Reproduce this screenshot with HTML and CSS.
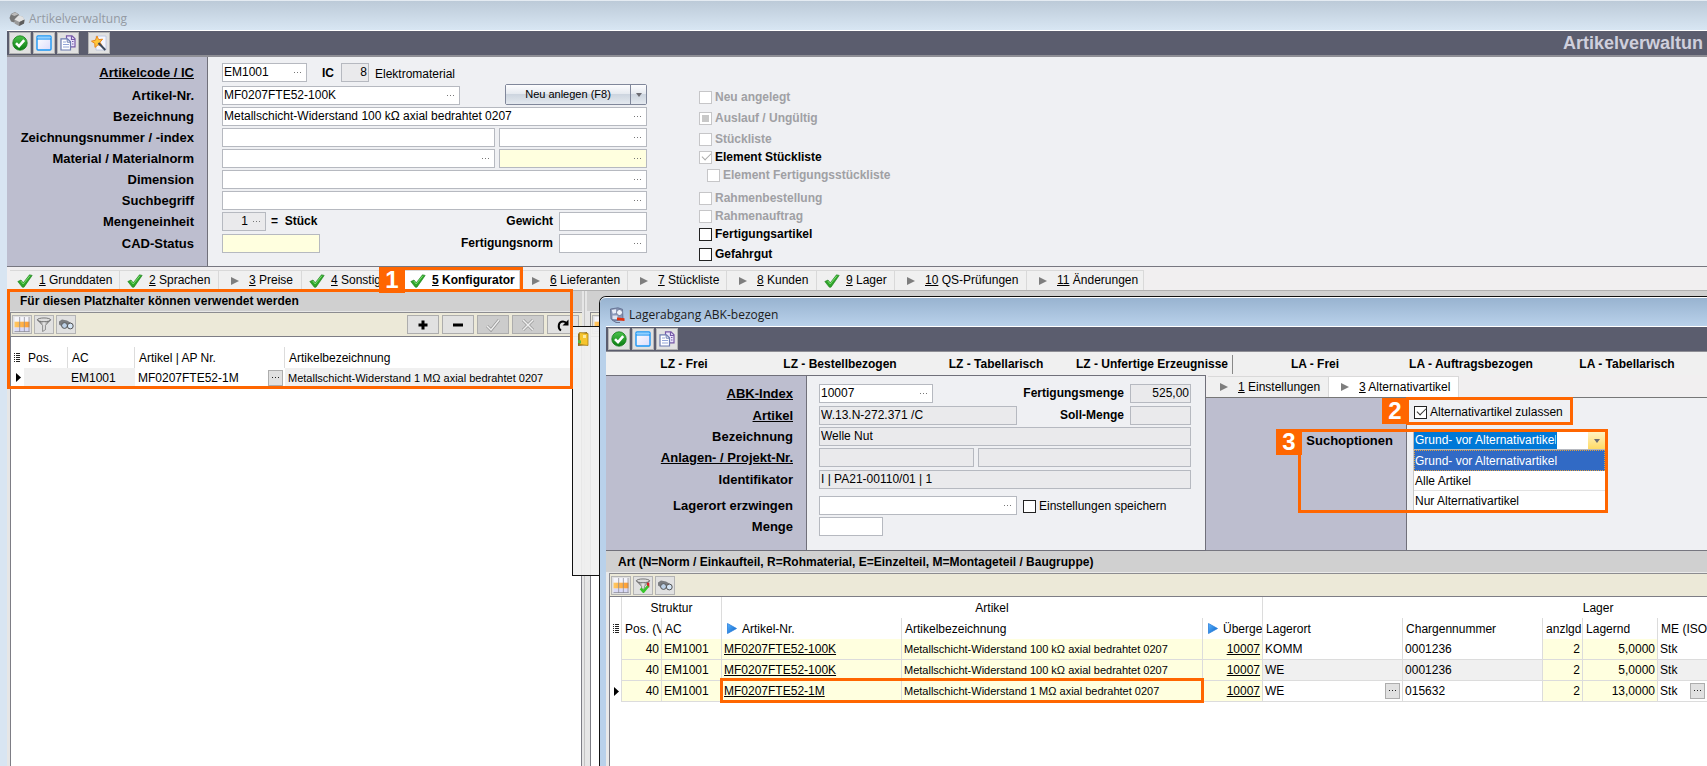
FILE: index.html
```html
<!DOCTYPE html>
<html lang="de">
<head>
<meta charset="utf-8">
<title>Artikelverwaltung</title>
<link rel="stylesheet" href="styles.css">
</head>
<body>
<svg class="sprite" aria-hidden="true">
  <defs>
    <linearGradient id="gGreen" x1="0" y1="0" x2="0" y2="1"><stop offset="0" stop-color="#4cc24a"/><stop offset="1" stop-color="#0a7d12"/></linearGradient>
    <linearGradient id="gWin" x1="0" y1="0" x2="1" y2="1"><stop offset="0" stop-color="#ffffff"/><stop offset="1" stop-color="#dcdcfb"/></linearGradient>
    <linearGradient id="gOrange" x1="0" y1="0" x2="1" y2="0"><stop offset="0" stop-color="#ffc963"/><stop offset="1" stop-color="#ff9a2e"/></linearGradient>
    <linearGradient id="gMetal" x1="0" y1="0" x2="1" y2="0"><stop offset="0" stop-color="#444"/><stop offset=".5" stop-color="#eee"/><stop offset="1" stop-color="#555"/></linearGradient>
    <linearGradient id="gBlue" x1="0" y1="0" x2="1" y2="1"><stop offset="0" stop-color="#5ab4ff"/><stop offset="1" stop-color="#0a62c8"/></linearGradient>
  </defs>
  <symbol id="ok" viewBox="0 0 16 16"><circle cx="8" cy="8" r="7.2" fill="url(#gGreen)" stroke="#117a17" stroke-width=".8"/><path d="M4 8.2l3 3 5.2-6" fill="none" stroke="#fff" stroke-width="2.6"/></symbol>
  <symbol id="window" viewBox="0 0 16 16"><rect x="1" y="1" width="14" height="14" rx="1" fill="url(#gWin)" stroke="#1b97f5" stroke-width="1.4"/><path d="M1.6 2.4h12.8" stroke="#8fd0ff" stroke-width="1.4"/><path d="M1 4h14" stroke="#1b97f5" stroke-width="1.2"/></symbol>
  <symbol id="copy" viewBox="0 0 16 16"><path d="M6.5.8h5.5l3 3v8H6.500z" fill="#e9e4fb" stroke="#7759a8" stroke-width="1.2"/><path d="M11.500 1v3.500h3.500M12 6.500h1.500M12 9h1.500" fill="none" stroke="#7759a8" stroke-width="1.2"/><path d="M1 3.800h6.500l3 3V15H1z" fill="#fff" stroke="#6b7bb0" stroke-width="1.200"/><path d="M7.200 4v3.200h3.200" fill="none" stroke="#6b7bb0"/><path d="M3 7h3M3 9.500h6M3 12h6" stroke="#93a6d8" stroke-width="1.200"/></symbol>
  <symbol id="wand" viewBox="0 0 16 16"><path d="M5 1h10v14H5z" fill="#f4f6fd" stroke="#b8c2dd" stroke-width=".8"/><path d="M6 1l1.600 3.600 4-.4-2.600 3 2 3.600-4-1-3 2.600-.2-4L.500 6.200l4-1z" fill="#ffc63a" stroke="#e8871e" stroke-width="1"/><path d="M7.500 8l6.800 7" stroke="#3c4a5c" stroke-width="2"/></symbol>
  <symbol id="cubes" viewBox="0 0 16 16"><path d="M.5 7l1.500-4L6 1l4 2.500L9.500 8 5 11.500 2 10.500z" fill="#777"/><path d="M2 3.500L6 1.200l3.500 2L5.500 5z" fill="#bbb"/><path d="M5.500 8.500l4-4 4 1L15.500 9l-.5 3.500-5 2.500-4.500-2.500z" fill="#9a9a9a"/><path d="M5.500 8.500l4-4 4 1 2 3L10.500 11z" fill="#e2e2e2"/><path d="M10.500 11l5-2.500-.5 4-4.800 2.500z" fill="#5d5d5d"/></symbol>
  <symbol id="stock" viewBox="0 0 16 16"><path d="M1.500 2L9 .800l4.500 1.500.5 10L6 14l-4-2z" fill="#8c9abb" stroke="#5c6889" stroke-width=".8"/><path d="M2.800 3l4-.8 1 3.600-4 1z" fill="#e7edf8"/><circle cx="10.500" cy="5.500" r="3" fill="#eff3fb" stroke="#5c6889" stroke-width=".8"/><path d="M3.500 8.500h5v3.500h-5z" fill="#dfe5f2"/><path d="M3 13l4 2.500h4" stroke="#6c7796" fill="none"/><path d="M8 10.500l7.500.8v2.800L8 13.300z" fill="#e2310f"/></symbol>
  <symbol id="check" viewBox="0 0 16 14"><path d="M.8 7.500L4 6l2.300 2.800L12.500.800l2.700.6L7 13.200H5.300z" fill="#2fa52a" stroke="#1f7e1d" stroke-width=".6"/><path d="M3.800 7l2.400 3L13 1.600" fill="none" stroke="#7ade70" stroke-width="1"/></symbol>
  <symbol id="tri" viewBox="0 0 8 8"><path d="M0 0l8 4-8 4z" fill="#7e7e7e"/></symbol>
  <symbol id="tribl" viewBox="0 0 10 11"><path d="M.5.500l9 5-9 5z" fill="url(#gBlue)" stroke="#2a7edb" stroke-width=".8"/></symbol>
  <symbol id="mark" viewBox="0 0 5 9"><path d="M0 0l5 4.500L0 9z" fill="#000"/></symbol>
  <symbol id="rows" viewBox="0 0 6 10"><path d="M0 .5h1M2 .5h4M0 2.500h1M2 2.500h4M0 4.500h1M2 4.500h4M0 6.500h1M2 6.500h4M0 8.500h1M2 8.500h4" stroke="#222"/></symbol>
  <symbol id="grid" viewBox="0 0 16 16"><rect width="16" height="16" fill="#f4f4fb"/><rect y="11" width="16" height="5" fill="#dadaf7"/><rect y="5" width="16" height="6" fill="url(#gOrange)"/><path d="M5.500 0v16M10.500 0v16M0 15.500h16M15.500 0v16" stroke="#8b8b93" stroke-width=".8"/></symbol>
  <symbol id="funnel" viewBox="0 0 16 16"><path d="M1 3l5.500 6v6.500l3-2V9L15 3z" fill="url(#gMetal)" stroke="#555" stroke-width=".6"/><ellipse cx="8" cy="3" rx="7" ry="2" fill="#ddd" stroke="#555" stroke-width=".8"/></symbol>
  <symbol id="funnel2" viewBox="0 0 16 16"><path d="M1 3l5.500 6v4l3-2V9L15 3z" fill="url(#gMetal)" stroke="#555" stroke-width=".6"/><ellipse cx="8" cy="3" rx="7" ry="2" fill="#ddd" stroke="#555" stroke-width=".8"/><path d="M13.500 5v5" stroke="#d92323" stroke-width="2.500"/><path d="M5.500 11l3 3.500 5-6" fill="none" stroke="#38c42c" stroke-width="2.800"/></symbol>
  <symbol id="bino" viewBox="0 0 16 12"><path d="M1 3l3-2 5 1 5 3 1 4-4 1-3-3-4 1-3-2z" fill="#7b7d80"/><circle cx="6.500" cy="7" r="2.900" fill="#bcd0e6" stroke="#555"/><circle cx="12.300" cy="7.500" r="2.900" fill="#d5e5f5" stroke="#555"/></symbol>
  <symbol id="door" viewBox="0 0 12 16"><path d="M1 2.500L10 1v13L1 15z" fill="#8f6a1d"/><path d="M2.500 1.500L11 2.500v12l-8.500-1z" fill="#f6c42d" stroke="#a37c15" stroke-width=".8"/><rect x="6" y="4" width="3" height="3" fill="#fdeaa0"/><path d="M1 9l3 .5v3L1 12z" fill="#55b640"/></symbol>
  <symbol id="reload" viewBox="0 0 14 14"><path d="M5 12.500C1.500 10.500 2 3.500 7 3.500c2 0 3 1 3.500 2" fill="none" stroke="#000" stroke-width="2"/><path d="M12.500 1.500v6h-6z" fill="#000"/></symbol>
</svg>

<div class="app">
  <header class="titlebar"><svg class="i16"><use href="#cubes"/></svg><h1>Artikelverwaltung</h1></header>
  <div class="frame">
    <div class="toolbar">
      <button class="tool" aria-label="OK"><svg><use href="#ok"/></svg></button>
      <button class="tool" aria-label="Fenster"><svg><use href="#window"/></svg></button>
      <button class="tool" aria-label="Kopieren"><svg><use href="#copy"/></svg></button>
      <button class="tool tool--apart" aria-label="Assistent"><svg><use href="#wand"/></svg></button>
      <span class="toolbar__name">Artikelverwaltun</span>
    </div>

    <section class="form">
      <div class="labels">
        <a class="row row--first" href="#code">Artikelcode / IC</a>
        <label class="row" for="nr">Artikel-Nr.</label>
        <label class="row" for="bez">Bezeichnung</label>
        <label class="row" for="zei">Zeichnungsnummer / -index</label>
        <label class="row" for="mat">Material / Materialnorm</label>
        <label class="row" for="dim">Dimension</label>
        <label class="row" for="such">Suchbegriff</label>
        <label class="row row--tall" for="me">Mengeneinheit</label>
        <label class="row" for="cad">CAD-Status</label>
      </div>
      <div class="fields fields--main">
        <div class="row row--first">
          <span class="field w85"><input id="code" value="EM1001"><button class="dots" aria-label="Auswahl"></button></span>
          <label class="cap cap--ic" for="ic">IC</label>
          <span class="field field--ro w28"><input id="ic" class="num" value="8" readonly></span>
          <span class="plain">Elektromaterial</span>
        </div>
        <div class="row">
          <span class="field w238"><input id="nr" value="MF0207FTE52-100K"><button class="dots" aria-label="Auswahl"></button></span>
          <span class="split"><button class="split__main">Neu anlegen (F8)</button><button class="split__more" aria-label="Mehr"></button></span>
        </div>
        <div class="row"><span class="field grow"><input id="bez" value="Metallschicht-Widerstand 100 kΩ axial bedrahtet 0207"><button class="dots" aria-label="Auswahl"></button></span></div>
        <div class="row"><span class="field grow"><input id="zei"></span><span class="field w148"><input aria-label="Zeichnungsindex"><button class="dots" aria-label="Auswahl"></button></span></div>
        <div class="row"><span class="field grow"><input id="mat"><button class="dots" aria-label="Auswahl"></button></span><span class="field field--yellow w148"><input aria-label="Materialnorm"><button class="dots" aria-label="Auswahl"></button></span></div>
        <div class="row"><span class="field grow"><input id="dim"><button class="dots" aria-label="Auswahl"></button></span></div>
        <div class="row"><span class="field grow"><input id="such"><button class="dots" aria-label="Auswahl"></button></span></div>
        <div class="row row--tall"><span class="field field--ro w44"><input id="me" class="num" value="1" readonly><button class="dots" aria-label="Auswahl"></button></span><span class="cap">=&nbsp; Stück</span><label class="cap cap--end" for="gew">Gewicht</label><span class="field w88"><input id="gew"></span></div>
        <div class="row"><span class="field field--yellow w98"><input id="cad"></span><label class="cap cap--end" for="fno">Fertigungsnorm</label><span class="field w88"><input id="fno"><button class="dots" aria-label="Auswahl"></button></span></div>
      </div>
      <div class="checks">
        <label class="chk is-off"><input type="checkbox" disabled>Neu angelegt</label>
        <label class="chk is-off chk--wide"><input type="checkbox" class="mixed" disabled>Auslauf / Ungültig</label>
        <label class="chk is-off chk--wide"><input type="checkbox" disabled>Stückliste</label>
        <label class="chk"><input type="checkbox" checked disabled>Element Stückliste</label>
        <label class="chk is-off chk--sub"><input type="checkbox" disabled>Element Fertigungsstückliste</label>
        <label class="chk is-off chk--group"><input type="checkbox" disabled>Rahmenbestellung</label>
        <label class="chk is-off"><input type="checkbox" disabled>Rahmenauftrag</label>
        <label class="chk"><input type="checkbox">Fertigungsartikel</label>
        <label class="chk chk--last"><input type="checkbox">Gefahrgut</label>
      </div>
    </section>

    <nav class="tabs">
      <button class="tab"><svg class="ck"><use href="#check"/></svg><span><u>1</u> Grunddaten</span></button>
      <button class="tab"><svg class="ck"><use href="#check"/></svg><span><u>2</u> Sprachen</span></button>
      <button class="tab"><svg class="tr"><use href="#tri"/></svg><span><u>3</u> Preise</span></button>
      <button class="tab"><svg class="ck"><use href="#check"/></svg><span><u>4</u> Sonstig</span></button>
      <button class="tab is-active"><svg class="ck"><use href="#check"/></svg><span><u>5</u> Konfigurator</span><i class="mark mark--tab"></i><b class="badge badge--tab">1</b></button>
      <button class="tab"><svg class="tr"><use href="#tri"/></svg><span><u>6</u> Lieferanten</span></button>
      <button class="tab"><svg class="tr"><use href="#tri"/></svg><span><u>7</u> Stückliste</span></button>
      <button class="tab"><svg class="tr"><use href="#tri"/></svg><span><u>8</u> Kunden</span></button>
      <button class="tab"><svg class="ck"><use href="#check"/></svg><span><u>9</u> Lager</span></button>
      <button class="tab"><svg class="tr"><use href="#tri"/></svg><span><u>10</u> QS-Prüfungen</span></button>
      <button class="tab"><svg class="tr"><use href="#tri"/></svg><span><u>11</u> Änderungen</span></button>
    </nav>

    <div class="panes">
      <section class="pane pane--left">
        <h2 class="bar">Für diesen Platzhalter können verwendet werden</h2>
        <div class="gridbar">
          <button class="mini" aria-label="Tabelle"><svg><use href="#grid"/></svg></button>
          <button class="mini" aria-label="Filter"><svg><use href="#funnel"/></svg></button>
          <button class="mini" aria-label="Suchen"><svg><use href="#bino"/></svg></button>
          <span class="gridbar__edit">
            <button class="edit" aria-label="Hinzufügen"><svg viewBox="0 0 14 14"><path d="M2.500 7h9M7 2.500v9" stroke="#000" stroke-width="3"/></svg></button>
            <button class="edit" aria-label="Entfernen"><svg viewBox="0 0 14 14"><path d="M2 7h10" stroke="#000" stroke-width="3"/></svg></button>
            <button class="edit edit--off" aria-label="Bestätigen" disabled><svg viewBox="0 0 14 14"><path d="M1 8l4 4 8-10" fill="none" stroke="#999" stroke-width="3"/><path d="M1 8l4 4 8-10" fill="none" stroke="#eee" stroke-width="1.500"/></svg></button>
            <button class="edit edit--off" aria-label="Abbrechen" disabled><svg viewBox="0 0 14 14"><path d="M2 2l10 10M12 2L2 12" stroke="#999" stroke-width="3"/><path d="M2 2l10 10M12 2L2 12" stroke="#eee" stroke-width="1.500"/></svg></button>
            <button class="edit" aria-label="Aktualisieren"><svg><use href="#reload"/></svg></button>
          </span>
        </div>
        <div class="gridbox">
          <table class="t1">
            <colgroup><col class="c-ind"><col class="c-p"><col class="c-a"><col class="c-n"><col></colgroup>
            <thead><tr><th><svg class="rows"><use href="#rows"/></svg></th><th>Pos.</th><th>AC</th><th>Artikel | AP Nr.</th><th>Artikelbezeichnung</th></tr></thead>
            <tbody><tr><td class="ind"><svg class="cur"><use href="#mark"/></svg></td><td></td><td>EM1001</td><td class="white"><span class="cell">MF0207FTE52-1M<button class="pick" aria-label="Auswahl"></button></span></td><td class="small">Metallschicht-Widerstand 1 MΩ axial bedrahtet 0207</td></tr></tbody>
          </table>
        </div>
        <i class="mark mark--pane"></i>
      </section>
      <div class="splitter"></div>
      <section class="pane pane--right"><h2 class="bar"></h2><div class="gridbar"><button class="mini" aria-label="Tabelle"><svg><use href="#grid"/></svg></button></div><div class="gridbox"></div></section>
    </div>
  </div>

  <aside class="flyout"><svg><use href="#door"/></svg></aside>

  <div class="dialog">
    <header class="titlebar titlebar--on"><svg class="i16"><use href="#stock"/></svg><h1>Lagerabgang ABK-bezogen</h1></header>
    <div class="dialog__body">
      <div class="toolbar">
        <button class="tool" aria-label="OK"><svg><use href="#ok"/></svg></button>
        <button class="tool" aria-label="Fenster"><svg><use href="#window"/></svg></button>
        <button class="tool" aria-label="Kopieren"><svg><use href="#copy"/></svg></button>
      </div>
      <nav class="modes">
        <button>LZ - Frei</button><button>LZ - Bestellbezogen</button><button>LZ - Tabellarisch</button><button>LZ - Unfertige Erzeugnisse</button><hr><button>LA - Frei</button><button>LA - Auftragsbezogen</button><button>LA - Tabellarisch</button>
      </nav>
      <div class="halves">
        <section class="form form--abk">
          <div class="labels">
            <a class="row row--tall" href="#abk">ABK-Index</a>
            <a class="row" href="#art">Artikel</a>
            <label class="row" for="bez2">Bezeichnung</label>
            <a class="row row--tall" href="#anl">Anlagen- / Projekt-Nr.</a>
            <label class="row row--gap" for="idf">Identifikator</label>
            <label class="row" for="lag">Lagerort erzwingen</label>
            <label class="row" for="men">Menge</label>
          </div>
          <div class="fields fields--abk">
            <div class="row row--tall"><span class="field w114"><input id="abk" value="10007"><button class="dots" aria-label="Auswahl"></button></span><label class="cap cap--end" for="fm">Fertigungsmenge</label><span class="field field--ro w61"><input id="fm" class="num" value="525,00" readonly></span></div>
            <div class="row"><span class="field field--ro w198"><input id="art" value="W.13.N-272.371 /C" readonly></span><label class="cap cap--end" for="sm">Soll-Menge</label><span class="field field--ro w61"><input id="sm" readonly></span></div>
            <div class="row"><span class="field field--ro grow"><input id="bez2" value="Welle Nut" readonly></span></div>
            <div class="row row--tall"><span class="field field--ro w155"><input id="anl" readonly></span><span class="field field--ro grow"><input aria-label="Projekt-Nr." readonly></span></div>
            <div class="row row--gap"><span class="field field--ro grow"><input id="idf" value="I | PA21-00110/01 | 1" readonly></span></div>
            <div class="row"><span class="field w198"><input id="lag"><button class="dots" aria-label="Auswahl"></button></span><label class="chk chk--plain"><input type="checkbox">Einstellungen speichern</label></div>
            <div class="row"><span class="field w64"><input id="men"></span></div>
          </div>
        </section>
        <section class="options">
          <nav class="tabs tabs--options">
            <button class="tab"><svg class="tr"><use href="#tri"/></svg><span><u>1</u> Einstellungen</span></button>
            <button class="tab is-active"><svg class="tr"><use href="#tri"/></svg><span><u>3</u> Alternativartikel</span></button>
          </nav>
          <div class="form form--options">
            <div class="labels"><label for="opt">Suchoptionen</label></div>
            <div class="fields">
              <div class="allow"><label class="chk chk--plain"><input type="checkbox" checked>Alternativartikel zulassen</label><i class="mark mark--allow"></i><b class="badge badge--allow">2</b></div>
              <div class="combo">
                <select id="opt"><option>Grund- vor Alternativartikel</option><option>Alle Artikel</option><option>Nur Alternativartikel</option></select>
                <button class="combo__btn" aria-label="Öffnen"></button>
                <ul class="list" role="listbox"><li class="is-sel" role="option">Grund- vor Alternativartikel</li><li role="option">Alle Artikel</li><li role="option">Nur Alternativartikel</li></ul>
                <i class="mark mark--combo"></i><b class="badge badge--combo">3</b>
              </div>
            </div>
          </div>
        </section>
      </div>
      <section class="pane pane--stock">
        <h2 class="bar">Art (N=Norm / Einkaufteil, R=Rohmaterial, E=Einzelteil, M=Montageteil / Baugruppe)</h2>
        <div class="gridbar">
          <button class="mini" aria-label="Tabelle"><svg><use href="#grid"/></svg></button>
          <button class="mini" aria-label="Filter"><svg><use href="#funnel2"/></svg></button>
          <button class="mini" aria-label="Suchen"><svg><use href="#bino"/></svg></button>
        </div>
        <div class="gridbox">
          <table class="t2">
            <colgroup><col class="s-ind"><col class="s-pos"><col class="s-ac"><col class="s-nr"><col class="s-bez"><col class="s-ac"><col class="s-ort"><col class="s-ort"><col class="s-pos"><col class="s-lag"><col class="s-me"><col class="s-rest"></colgroup>
            <thead>
              <tr class="bands"><th></th><th colspan="2">Struktur</th><th colspan="3">Artikel</th><th colspan="6">Lager</th></tr>
              <tr><th><svg class="rows"><use href="#rows"/></svg></th><th>Pos. (V</th><th>AC</th><th><span class="ent"><svg><use href="#tribl"/></svg>Artikel-Nr.</span></th><th>Artikelbezeichnung</th><th><span class="ent"><svg><use href="#tribl"/></svg>Überge</span></th><th>Lagerort</th><th>Chargennummer</th><th>anzlgd</th><th>Lagernd</th><th>ME (ISO</th><th></th></tr>
            </thead>
            <tbody>
              <tr><td class="ind"></td><td class="y r">40</td><td class="y">EM1001</td><td class="y"><a href="#a1">MF0207FTE52-100K</a></td><td class="y small">Metallschicht-Widerstand 100 kΩ axial bedrahtet 0207</td><td class="y r"><a href="#u1">10007</a></td><td>KOMM</td><td>0001236</td><td class="y r">2</td><td class="y r">5,0000</td><td>Stk</td><td></td></tr>
              <tr class="alt"><td class="ind"></td><td class="y r">40</td><td class="y">EM1001</td><td class="y"><a href="#a2">MF0207FTE52-100K</a></td><td class="y small">Metallschicht-Widerstand 100 kΩ axial bedrahtet 0207</td><td class="y r"><a href="#u2">10007</a></td><td>WE</td><td>0001236</td><td class="y r">2</td><td class="y r">5,0000</td><td>Stk</td><td></td></tr>
              <tr><td class="ind"><svg class="cur"><use href="#mark"/></svg></td><td class="y r">40</td><td class="y">EM1001</td><td class="y framed"><a href="#a3">MF0207FTE52-1M</a><i class="mark mark--row"></i></td><td class="y small">Metallschicht-Widerstand 1 MΩ axial bedrahtet 0207</td><td class="y r"><a href="#u3">10007</a></td><td><span class="cell">WE<button class="pick" aria-label="Auswahl"></button></span></td><td>015632</td><td class="y r">2</td><td class="y r">13,0000</td><td><span class="cell">Stk<button class="pick" aria-label="Auswahl"></button></span></td><td></td></tr>
            </tbody>
          </table>
        </div>
      </section>
    </div>
  </div>
</div>
</body>
</html>
```
FILE: styles.css
```css
* { box-sizing: border-box; }
body {
  margin: 0;
  font: 12px/15px "Liberation Sans", Arial, sans-serif;
  color: #000;
  background: #d8e5f2;
}
button, input, select { font: inherit; color: inherit; margin: 0; padding: 0; border: 0; background: none; border-radius: 0; outline: 0; }
h1, h2, ul { margin: 0; padding: 0; list-style: none; }
i, b { font-style: normal; }
.sprite { position: absolute; width: 0; height: 0; }
.app { position: relative; height: 100vh; overflow: hidden; display: flex; flex-direction: column; }

/* Window chrome */
.titlebar {
  height: 30px;
  flex: none;
  display: flex;
  align-items: center;
  gap: 4px;
  padding: 6px 0 0 9px;
  border-top: 1px solid #e4ebf2;
  background: linear-gradient(#bccad8, #d8e6f3);
}
.titlebar h1 { font: 12px/16px "Open Sans", "Noto Sans", sans-serif; color: #949aa3; }
.titlebar--on { height: 29px; background: linear-gradient(#98b3d0, #b9d1ea); border-top-color: #fff; border-radius: 6px 0 0 0; }
.titlebar--on h1 { color: #1b1b1b; }
.i16 { width: 16px; height: 16px; }
.frame { flex: 1; min-height: 0; margin-left: 7px; border-top: 1px solid #fff; display: flex; flex-direction: column; background: #f0f0f0; }
.toolbar {
  height: 26px;
  flex: none;
  display: flex;
  align-items: flex-start;
  gap: 2px;
  padding: 1px 0 0 2px;
  background: #5b5d6e;
  border-bottom: 2px solid #8e8e95;
}
.tool { width: 22px; height: 22px; display: grid; place-items: center; background: #e1e1e1; border: 1px solid #b4b4b4; }
.tool svg { width: 16px; height: 16px; }
.tool--apart { margin-left: 7px; }
.toolbar__name { margin-left: auto; padding-right: 4px; white-space: nowrap; font-size: 18px; line-height: 23px; font-weight: bold; color: #cfcfdc; }

/* Forms */
.form { display: flex; background: #eff0f3; border-bottom: 1px solid #777780; }
.labels { width: 201px; flex: none; padding: 6px 13px 11px 0; display: flex; flex-direction: column; align-items: flex-end; background: #bdbecf; border-right: 1px solid #70707a; font-size: 13px; font-weight: bold; line-height: 19px; }
.labels a { color: #000; text-decoration: underline; }
.row { height: 21px; display: flex; flex: none; }
.row--first { height: 23px; }
.row--tall { height: 22px; }
.row--gap { height: 26px; }
.fields .row { gap: 4px; line-height: 19px; }
.fields--main { width: 425px; margin-left: 14px; padding-top: 6px; }
.field { display: flex; height: 19px; background: #fff; border: 1px solid #b6b9c0; }
.field--ro { background: #eaeaec; }
.field--yellow { background: #ffffdf; }
.field input { flex: 1; min-width: 0; padding: 0 1px; line-height: 17px; }
.field .num { text-align: right; }
.grow { flex: 1; }
.w28 { width: 28px; } .w44 { width: 44px; } .w61 { width: 61px; } .w64 { width: 64px; }
.w85 { width: 85px; } .w88 { width: 88px; } .w98 { width: 98px; } .w114 { width: 114px; }
.w148 { width: 148px; } .w155 { width: 155px; } .w198 { width: 198px; } .w238 { width: 238px; }
.dots { width: 16px; position: relative; flex: none; }
.dots::before, .pick::before { content: ""; position: absolute; left: 4px; top: 8px; width: 1px; height: 1px; background: #777; box-shadow: 3px 0 #777, 6px 0 #777; }
.cap { font-weight: bold; padding: 0 1px; }
.cap--ic { padding: 1px 3px 0 11px; }
.cap--end { margin-left: auto; padding-right: 2px; }
.plain { padding: 2px 0 0 2px; }
.split { display: flex; height: 21px; margin: -2px 0 0 auto; border: 1px solid #80879a; border-radius: 2px; font-size: 11px; }
.split button { background: linear-gradient(#fdfdfe, #e6eaf0 45%, #cdd5df 50%, #e4e9ef); }
.split__main { width: 124px; }
.split__more { width: 16px; border-left: 1px solid #80879a; display: grid; place-items: center; }
.split__more::before, .combo__btn::before { content: ""; border: 3px solid transparent; border-top: 4px solid #6c6c72; border-bottom: 0; }

/* Tick boxes */
.checks { margin-left: 52px; padding-top: 31px; display: flex; flex-direction: column; align-items: flex-start; }
.chk { display: flex; align-items: center; gap: 3px; height: 17px; margin-top: 1px; font-weight: bold; white-space: nowrap; }
.chk input { appearance: none; width: 13px; height: 13px; background: #fff; border: 1px solid #222; position: relative; }
.chk input:disabled { border-color: #c6c6c8; }
.chk input:checked::before { content: ""; position: absolute; left: 2px; top: 1px; width: 8px; height: 4px; border: solid #333; border-width: 0 0 1px 1px; transform: rotate(-45deg); }
.chk input:checked:disabled::before { border-color: #aaa; }
.chk .mixed::before { content: ""; position: absolute; inset: 2px; background: #c8c8c8; }
.is-off { color: #a0a0a4; }
.chk--wide { margin-top: 4px; }
.chk--last { margin-top: 3px; }
.chk--group { margin-top: 6px; }
.chk--sub { margin-left: 8px; }
.chk--plain { font-weight: normal; margin: 0; }

/* Tabs */
.tabs { flex: none; display: grid; grid-template-columns: 110px 99px 83px 101px 117px 108px 99px 90px 78px 132px 117px; height: 24px; padding: 3px 0 0 3px; border-bottom: 1px solid #b0b0b0; background: #f1eff0; }
.tab { position: relative; display: flex; align-items: center; border: solid #d9d9d9; border-width: 1px 1px 0 0; background: #f0f0f0; white-space: nowrap; }
.tab svg { flex: none; }
.ck { width: 16px; height: 14px; margin: 0 6px 0 7px; }
.tr { width: 8px; height: 8px; margin: 0 10px 0 12px; }
.tab.is-active { background: #fff; z-index: 1; }
.tabs > .is-active:nth-child(5) { font-weight: bold; z-index: 3; }

/* Grids */
.panes { flex: 1; min-height: 0; display: grid; grid-template-columns: 575px 5px 1fr; background: #e6e6e6; }
.pane { position: relative; min-width: 0; display: flex; flex-direction: column; }
.bar { flex: none; height: 20px; padding-left: 13px; background: #d0d0d0; font-size: 12px; line-height: 20px; font-weight: bold; white-space: nowrap; overflow: hidden; }
.gridbar { flex: none; height: 24px; margin: 1px 0 0 3px; padding: 2px 3px 0 1px; display: flex; gap: 2px; background: #ece9d8; border: solid #8c8c90; border-width: 1px 0 0 1px; }
.mini { width: 20px; height: 19px; display: grid; place-items: center; background: #e1e1e1; border: 1px solid #b4b4b4; }
.mini svg { width: 16px; height: 15px; }
.gridbar__edit { margin-left: auto; display: flex; gap: 3px; }
.edit { width: 32px; height: 19px; display: grid; place-items: center; background: #e1e1e1; border: 1px solid #adadad; }
.edit--off { background: #cccccc; }
.edit svg { width: 14px; height: 14px; }
.gridbox { flex: 1; min-height: 0; margin-left: 3px; overflow: hidden; background: #fff; border: solid #7d7d85; border-width: 1px 1px 0 1px; }
.splitter { border: solid #e6e6e6; border-width: 0 2px; background: #c4c4c4; }
table { table-layout: fixed; border-collapse: separate; border-spacing: 0; }
th, td { padding: 0 2px; text-align: left; font-weight: normal; white-space: nowrap; overflow: hidden; line-height: 18px; }
th { padding: 0 3px; border-right: 1px solid #dcdcdc; }
td svg, th svg { display: block; }
.rows { width: 6px; height: 10px; }
.cur { width: 5px; height: 9px; margin-left: auto; }
.small { font-size: 11px; }
.cell { display: flex; align-items: center; justify-content: space-between; }
.pick { position: relative; flex: none; width: 15px; height: 16px; background: #e1e1e1; border: 1px solid #adadad; }
.pick::before { left: 3px; top: 6px; background: #222; box-shadow: 3px 0 #222, 6px 0 #222; }

.t1 { width: 100%; margin-top: 10px; }
.c-ind { width: 13px; } .c-p { width: 44px; } .c-a { width: 67px; } .c-n { width: 150px; }
.t1 th { height: 21px; }
.t1 th, .t1 td { padding-left: 4px; }
.t1 th:first-child, .t1 .ind { padding: 0 3px; border: 0; }
.t1 th:last-child { border: 0; }
.t1 td { height: 19px; padding-left: 3px; background: #f0f0f0; }
.t1 .ind, .t1 .white { background: #fff; }

.t2 { width: 1324px; }
.s-ind { width: 12px; } .s-pos { width: 40px; } .s-ac { width: 60px; } .s-nr { width: 180px; } .s-bez { width: 301px; }
.s-ort { width: 140px; } .s-lag { width: 75px; } .s-me { width: 50px; } .s-rest { width: 226px; }
.t2 th { height: 21px; }
.bands th { text-align: center; }
.t2 th:first-child, .t2 .ind { padding: 0 2px 0 3px; }
.t2 td { height: 21px; padding: 0 2px; border: solid #dcdcdc; border-width: 0 1px 1px 0; }
.t2 .ind { border-bottom: 0; }
.alt td { background: #f0f0f0; }
.alt .ind { background: #fff; }
.t2 .y { background: #ffffdf; }
.t2 .r { text-align: right; }
td a { color: #000; }
.ent { display: flex; align-items: center; gap: 5px; margin-left: 2px; }
.ent svg { flex: none; width: 10px; height: 11px; }

/* Overlays */
.mark { position: absolute; border: 3px solid #ff6600; pointer-events: none; }
.badge { position: absolute; width: 26px; height: 26px; background: #ff6600; color: #fff; font-size: 24px; line-height: 26px; font-weight: bold; text-align: center; }
.mark--tab { inset: -4px -4px -2px -1px; }
.badge--tab { left: -24px; top: -4px; }
.mark--pane { left: 0; top: -2px; width: 566px; height: 100px; z-index: 2; }
.flyout { position: absolute; left: 572px; top: 326px; width: 28px; height: 250px; padding: 4px; background: rgba(240, 240, 240, .92); border: 1px solid #111; }
.flyout svg { width: 12px; height: 16px; }
.dialog { position: absolute; left: 599px; top: 296px; right: 0; bottom: 0; display: flex; flex-direction: column; border: solid #111; border-width: 1px 0 0 1px; border-radius: 7px 0 0 0; background: #b9d1ea; z-index: 4; }
.dialog__body { flex: 1; min-height: 0; margin-left: 6px; display: flex; flex-direction: column; border-top: 1px solid #fff; background: #e9e9e9; }
.dialog .toolbar { height: 25px; border-bottom-width: 1px; }
.modes { flex: none; display: flex; align-items: center; height: 23px; padding-top: 2px; background: #f0f0f0; }
.modes button { width: 156px; font-weight: bold; flex: none; }
.modes hr { width: 1px; height: 19px; margin: 0 4px 0 2px; border: 0; background: #888; }
.halves { flex: none; display: flex; }
.form--abk { width: 600px; border: 1px solid #70707a; border-left: 0; }
.form--abk .labels { padding: 8px 13px 12px 0; }
.fields--abk { flex: 1; padding: 8px 14px 0 12px; }
.fields--abk .chk { height: 21px; margin-left: 2px; }
.options { flex: 1; display: flex; flex-direction: column; }
.tabs--options { grid-template-columns: 121px 130px; height: 23px; padding: 1px 0 0 2px; border-bottom-color: #777; }
.form--options { flex: 1; }
.form--options .labels { padding: 33px 13px 0 0; }
.form--options .fields { padding: 7px 0 0 6px; }
.allow { position: relative; width: 160px; height: 26px; padding-left: 1px; }
.allow .chk { height: 15px; }
.mark--allow { left: -7px; top: -8px; width: 167px; height: 28px; }
.badge--allow { left: -31px; top: -7px; }
.combo { position: relative; display: flex; width: 193px; height: 19px; background: #fff; border: 1px solid #b6b9c0; }
.combo select { appearance: none; width: 143px; padding: 0 1px; background: #0078d7; color: #fff; line-height: 17px; }
.combo__btn { width: 17px; margin-left: auto; display: grid; place-items: center; background: linear-gradient(#fff3c4, #ffdb66); }
.list { position: absolute; left: -1px; top: 18px; width: 193px; background: #fff; border: solid #c8c8c8; border-width: 0 1px; }
.list li { height: 20px; padding: 0 1px; line-height: 20px; border-bottom: 1px solid #e3e3e3; }
.list .is-sel { height: 21px; background: #316ac5; color: #fff; border: 1px dotted #e0a040; padding: 0; }
.mark--combo { left: -116px; top: -3px; width: 310px; height: 84px; }
.badge--combo { left: -138px; top: -3px; }
.pane--stock { flex: 1; min-height: 0; }
.pane--stock .bar { height: 21px; line-height: 22px; padding-left: 12px; }
.pane--stock .gridbar { height: 23px; }
.pane--stock .gridbox { border-right: 0; }
.t2 .framed { position: relative; overflow: visible; }
.mark--row { left: -2px; top: -3px; width: 484px; height: 25px; }
```
